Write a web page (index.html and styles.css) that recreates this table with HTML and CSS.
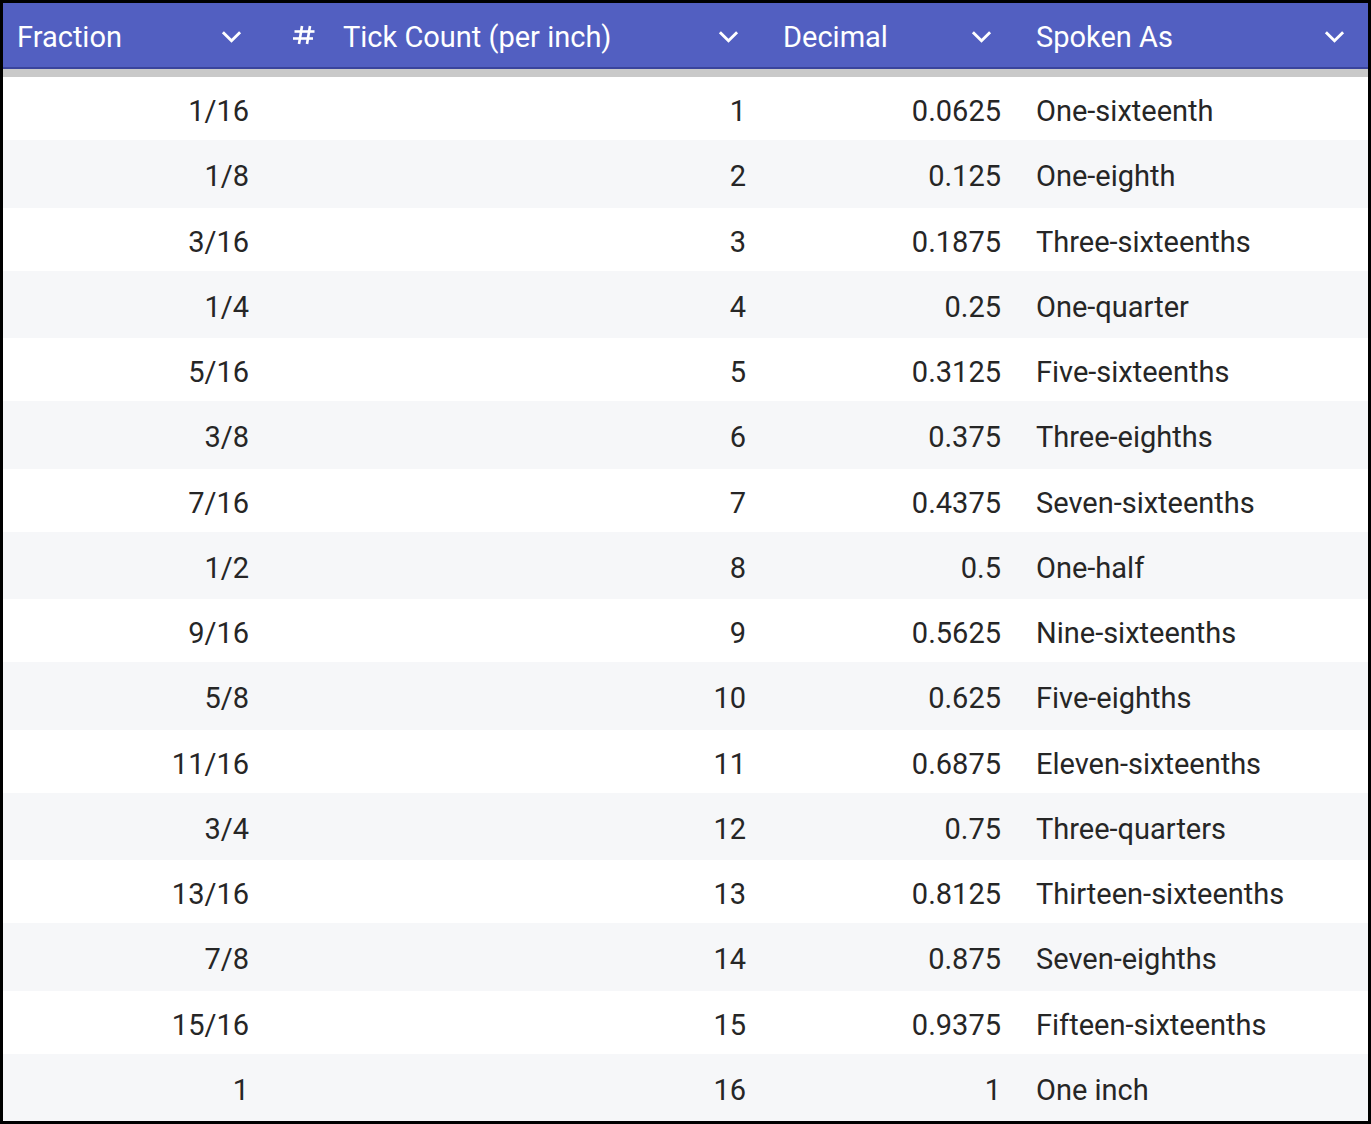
FILE: index.html
```html
<!DOCTYPE html>
<html>
<head>
<meta charset="utf-8">
<link rel="stylesheet" href="styles.css">
</head>
<body>
<div class="table">
  <div class="head">
    <div class="hcell h1"><span class="label">Fraction</span><svg class="chev" viewBox="0 0 22 13"><polyline points="2,2 11,11 20,2"/></svg></div>
    <div class="hcell h2"><svg class="hash" viewBox="0 0 24 20"><line x1="2.5" y1="6.5" x2="22.5" y2="6.5"/><line x1="1" y1="13.5" x2="21" y2="13.5"/><line x1="10" y1="1" x2="7" y2="19"/><line x1="18" y1="1" x2="15" y2="19"/></svg><span class="label">Tick Count (per inch)</span><svg class="chev" viewBox="0 0 22 13"><polyline points="2,2 11,11 20,2"/></svg></div>
    <div class="hcell h3"><span class="label">Decimal</span><svg class="chev" viewBox="0 0 22 13"><polyline points="2,2 11,11 20,2"/></svg></div>
    <div class="hcell h4"><span class="label">Spoken As</span><svg class="chev" viewBox="0 0 22 13"><polyline points="2,2 11,11 20,2"/></svg></div>
  </div>
  <div class="shade"></div>
  <div class="body">
    <div class="row"><div class="c c1">1/16</div><div class="c c2">1</div><div class="c c3">0.0625</div><div class="c c4">One-sixteenth</div></div>
    <div class="row alt"><div class="c c1">1/8</div><div class="c c2">2</div><div class="c c3">0.125</div><div class="c c4">One-eighth</div></div>
    <div class="row"><div class="c c1">3/16</div><div class="c c2">3</div><div class="c c3">0.1875</div><div class="c c4">Three-sixteenths</div></div>
    <div class="row alt"><div class="c c1">1/4</div><div class="c c2">4</div><div class="c c3">0.25</div><div class="c c4">One-quarter</div></div>
    <div class="row"><div class="c c1">5/16</div><div class="c c2">5</div><div class="c c3">0.3125</div><div class="c c4">Five-sixteenths</div></div>
    <div class="row alt"><div class="c c1">3/8</div><div class="c c2">6</div><div class="c c3">0.375</div><div class="c c4">Three-eighths</div></div>
    <div class="row"><div class="c c1">7/16</div><div class="c c2">7</div><div class="c c3">0.4375</div><div class="c c4">Seven-sixteenths</div></div>
    <div class="row alt"><div class="c c1">1/2</div><div class="c c2">8</div><div class="c c3">0.5</div><div class="c c4">One-half</div></div>
    <div class="row"><div class="c c1">9/16</div><div class="c c2">9</div><div class="c c3">0.5625</div><div class="c c4">Nine-sixteenths</div></div>
    <div class="row alt"><div class="c c1">5/8</div><div class="c c2">10</div><div class="c c3">0.625</div><div class="c c4">Five-eighths</div></div>
    <div class="row"><div class="c c1">11/16</div><div class="c c2">11</div><div class="c c3">0.6875</div><div class="c c4">Eleven-sixteenths</div></div>
    <div class="row alt"><div class="c c1">3/4</div><div class="c c2">12</div><div class="c c3">0.75</div><div class="c c4">Three-quarters</div></div>
    <div class="row"><div class="c c1">13/16</div><div class="c c2">13</div><div class="c c3">0.8125</div><div class="c c4">Thirteen-sixteenths</div></div>
    <div class="row alt"><div class="c c1">7/8</div><div class="c c2">14</div><div class="c c3">0.875</div><div class="c c4">Seven-eighths</div></div>
    <div class="row"><div class="c c1">15/16</div><div class="c c2">15</div><div class="c c3">0.9375</div><div class="c c4">Fifteen-sixteenths</div></div>
    <div class="row alt"><div class="c c1">1</div><div class="c c2">16</div><div class="c c3">1</div><div class="c c4">One inch</div></div>
  </div>
</div>
</body>
</html>
```
FILE: styles.css
```css
html, body {
  margin: 0;
  padding: 0;
  background: #000;
}
.table {
  box-sizing: border-box;
  width: 1371px;
  height: 1124px;
  border: 3px solid #000;
  background: #fff;
  font-family: Roboto, "Liberation Sans", sans-serif;
  font-size: 29px;
  color: #262626;
  display: flex;
  flex-direction: column;
}
.head {
  display: grid;
  grid-template-columns: 262px 497px 256px 1fr;
  height: 64px;
  background: #525fc1;
  border-bottom: 2px solid #3a449c;
  color: #fff;
}
.hcell {
  display: flex;
  align-items: center;
  padding-right: 23px;
  padding-top: 3px;
}
.hcell .label {
  flex: 1;
  white-space: nowrap;
}
.h1 { padding-left: 14px; }
.h2 { padding-left: 27px; }
.h3 { padding-left: 21px; padding-right: 26px; }
.h4 { padding-left: 18px; }
.hash {
  width: 24px;
  height: 20px;
  flex: none;
  margin-right: 27px;
  margin-top: -4px;
  stroke: #fff;
  stroke-width: 2.6;
}
.chev {
  width: 21px;
  height: 13px;
  flex: none;
  fill: none;
  stroke: #fff;
  stroke-width: 3;
}
.shade {
  height: 8px;
  background: #c9c9c9;
}
.body {
  flex: 1;
  display: flex;
  flex-direction: column;
}
.row {
  display: grid;
  grid-template-columns: 262px 497px 256px 1fr;
  height: 63px;
  align-items: center;
  background: #fff;
}
.row.alt {
  height: 67.5px;
  background: #f6f7f9;
}
.c {
  white-space: nowrap;
  padding-top: 5px;
}
.c1 { text-align: right; padding-right: 16px; }
.c2 { text-align: right; padding-right: 16px; }
.c3 { text-align: right; padding-right: 17px; }
.c4 { text-align: left; padding-left: 18px; }
```
